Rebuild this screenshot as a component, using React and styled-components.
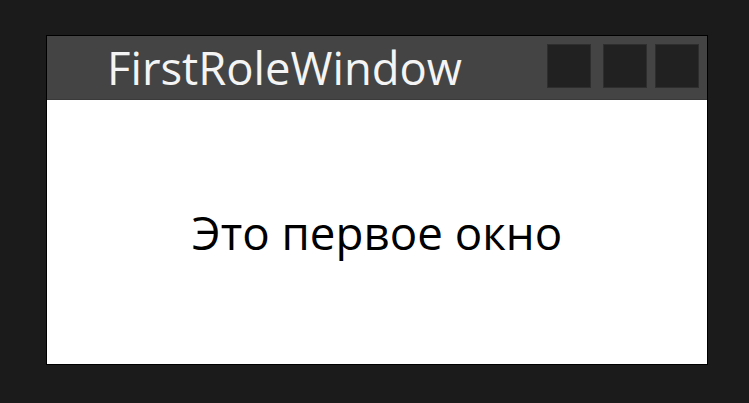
import styled, { createGlobalStyle } from "styled-components";

const GlobalStyle = createGlobalStyle`
  html, body {
    margin: 0;
    padding: 0;
    background: #1b1b1b;
  }
  body {
    font-family: "Open Sans", "Noto Sans", sans-serif;
  }
`;

const Page = styled.div`
  width: 749px;
  height: 403px;
  padding: 35px 0 0 46px;
  box-sizing: border-box;
`;

const Window = styled.div`
  width: 662px;
  height: 330px;
  border: 1px solid #000;
  box-sizing: border-box;
  display: flex;
  flex-direction: column;
  background: #fff;
`;

const TitleBar = styled.div`
  height: 63px;
  flex-shrink: 0;
  background: #444444;
  display: flex;
  align-items: center;
  padding: 0 8px 0 60px;
  border-bottom: 1px solid #3a3a3a;
`;

const Title = styled.div`
  flex: 1;
  color: #f4f4f4;
  font-size: 45.4px;
  line-height: 61px;
`;

const Controls = styled.div`
  display: flex;
  align-self: flex-start;
  padding-top: 8px;
`;

const ControlButton = styled.div`
  width: 44px;
  height: 44px;
  box-sizing: border-box;
  background: #212121;
  border: 1px solid #2e2e2e;
  margin-left: ${(p) => p.$ml || 0}px;
`;

const Content = styled.div`
  flex: 1;
  display: flex;
  align-items: center;
  justify-content: center;
  color: #000;
  font-size: 45.7px;
  line-height: 61px;
`;

export default function App() {
  return (
    <>
      <GlobalStyle />
      <Page>
        <Window>
          <TitleBar>
            <Title>FirstRoleWindow</Title>
            <Controls>
              <ControlButton />
              <ControlButton $ml={12} />
              <ControlButton $ml={8} />
            </Controls>
          </TitleBar>
          <Content>Это первое окно</Content>
        </Window>
      </Page>
    </>
  );
}
